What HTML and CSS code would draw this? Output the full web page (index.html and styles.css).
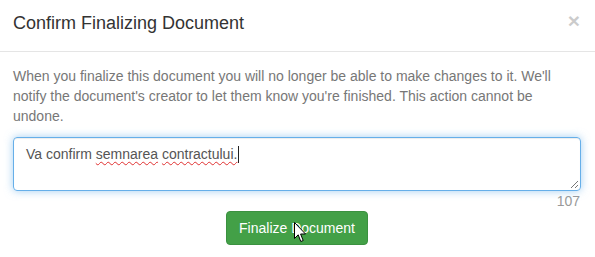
FILE: index.html
```html
<!DOCTYPE html>
<html lang="en">
<head>
    <meta charset="UTF-8">
    <meta name="viewport" content="width=device-width, initial-scale=1.0">
    <title>Confirm Finalizing Document</title>
    <link rel="stylesheet" href="styles.css">
</head>
<body>
    <div class="modal">
        <div class="modal-header">
            <h4 class="modal-title">Confirm Finalizing Document</h4>
            <span class="close">&times;</span>
        </div>
        <div class="modal-body">
            <p class="notice">When you finalize this document you will no longer be able to make changes to it. We'll notify the document's creator to let them know you're finished. This action cannot be undone.</p>
            <div class="message-box">
                Va confirm <span class="misspelled">semnarea</span> <span class="misspelled">contractului.</span><span class="caret"></span>
                <svg class="grip" width="9" height="9" viewBox="0 0 9 9">
                    <path d="M1 8 L8 1 M5 8 L8 5" stroke="#777" stroke-width="1"/>
                </svg>
            </div>
            <div class="char-count">107</div>
            <div class="actions">
                <button class="btn-success">Finalize Document</button>
                <svg class="cursor" width="13" height="21" viewBox="0 0 13 21">
                    <path d="M0.5 0.5 L0.5 16.5 L4.2 12.8 L6.8 19.5 L9.2 18.5 L6.6 12 L11.5 12 Z" fill="#fff" stroke="#000" stroke-width="1" stroke-linejoin="round"/>
                </svg>
            </div>
        </div>
    </div>
</body>
</html>
```

FILE: styles.css
```css
body {
    margin: 0;
    font-family: "Liberation Sans", Arial, sans-serif;
    font-size: 14px;
    line-height: 20px;
    background-color: #fff;
    color: #333;
}

.modal {
    width: 595px;
    height: 257px;
    overflow: hidden;
}

.modal-header {
    display: flex;
    justify-content: space-between;
    align-items: flex-start;
    height: 52px;
    padding: 10px 15px 0 13px;
    box-sizing: border-box;
    border-bottom: 1px solid #e5e5e5;
}

.modal-title {
    margin: 0;
    font-size: 18px;
    font-weight: normal;
    line-height: 26px;
    color: #333;
}

.close {
    font-size: 21px;
    font-weight: bold;
    line-height: 1;
    color: #000;
    opacity: 0.2;
}

.modal-body {
    padding: 14px 14px 0 13px;
}

.notice {
    margin: 0 0 11px 0;
    color: #777;
}

.message-box {
    position: relative;
    height: 54px;
    padding: 6px 12px;
    box-sizing: border-box;
    border: 1px solid #66afe9;
    border-radius: 4px;
    box-shadow: inset 0 1px 1px rgba(0, 0, 0, 0.075), 0 0 8px rgba(102, 175, 233, 0.6);
    color: #555;
}

.misspelled {
    text-decoration: underline wavy #e03030;
    text-decoration-thickness: 1px;
    text-underline-offset: 2px;
}

.caret {
    display: inline-block;
    width: 1px;
    height: 17px;
    margin-left: 1px;
    vertical-align: -4px;
    background-color: #222;
}

.grip {
    position: absolute;
    right: 1px;
    bottom: 1px;
}

.char-count {
    text-align: right;
    color: #999;
    padding-right: 1px;
}

.actions {
    position: relative;
    display: flex;
    justify-content: center;
}

.btn-success {
    font-family: inherit;
    font-size: 14px;
    line-height: 20px;
    padding: 6px 12px;
    color: #fff;
    background-color: #43a047;
    border: 1px solid #3b9140;
    border-radius: 4px;
    cursor: pointer;
}

.cursor {
    position: absolute;
    left: 281px;
    top: 11px;
}
```
